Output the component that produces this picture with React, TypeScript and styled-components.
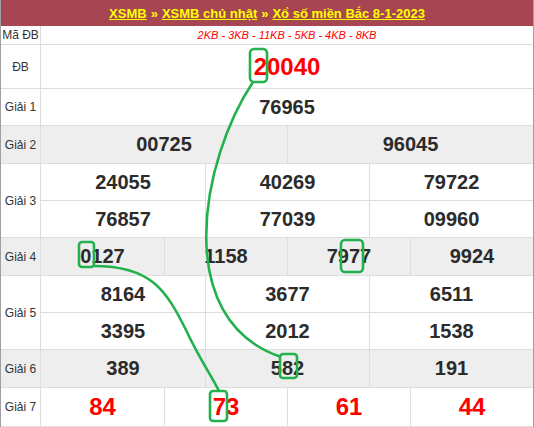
import React from "react";
import styled, { createGlobalStyle } from "styled-components";

const Global = createGlobalStyle`
  html, body { margin: 0; padding: 0; background: #fff; }
  body { font-family: "Liberation Sans", Arial, sans-serif; }
`;

const Board = styled.div`
  position: relative;
  width: 534px;
  box-sizing: border-box;
  border: 1px solid #a0a0a0;
  border-top: none;
  background: #fff;
  color: #333;
`;

const Header = styled.div`
  height: 26px;
  background: #a84552;
  display: flex;
  align-items: center;
  justify-content: center;
  gap: 4px;
  font-size: 13px;
  font-weight: bold;
  color: #ffff00;
`;

const HeaderLink = styled.a`
  color: #ffff00;
  text-decoration: underline;
`;

const Row = styled.div<{ $h: number; $alt?: boolean }>`
  display: grid;
  grid-template-columns: 40px 1fr;
  border-bottom: 1px solid #dddddd;
  background: ${(p) => (p.$alt ? "#eeeeee" : "#ffffff")};
  min-height: ${(p) => p.$h}px;
`;

const Label = styled.div`
  display: flex;
  align-items: center;
  justify-content: center;
  font-size: 12px;
  color: #333;
  border-right: 1px solid #dddddd;
`;

const Values = styled.div`
  display: flex;
  flex-direction: column;
`;

const Line = styled.div<{ $n: number; $h: number; $divider?: boolean }>`
  display: grid;
  grid-template-columns: repeat(${(p) => p.$n}, 1fr);
  height: ${(p) => p.$h}px;
  border-bottom: ${(p) => (p.$divider ? "1px solid #dddddd" : "none")};
`;

const Cell = styled.div<{ $size?: number; $red?: boolean }>`
  display: flex;
  align-items: center;
  justify-content: center;
  font-weight: bold;
  font-size: ${(p) => p.$size ?? 20}px;
  color: ${(p) => (p.$red ? "#ff0000" : "#2b2b2b")};
  border-left: 1px solid #dddddd;
  &:first-child { border-left: none; }
`;

const Codes = styled.div`
  display: flex;
  align-items: center;
  justify-content: center;
  font-size: 11px;
  font-style: italic;
  color: #ff0000;
`;

const Overlay = styled.svg`
  position: absolute;
  left: 0;
  top: 0;
  width: 534px;
  height: 427px;
  pointer-events: none;
`;

type Prize = {
  label: string;
  lines: string[][];
  heights: number[];
  alt?: boolean;
  size?: number;
  red?: boolean;
};

const prizes: Prize[] = [
  { label: "Giải 1", lines: [["76965"]], heights: [36] },
  { label: "Giải 2", lines: [["00725", "96045"]], heights: [37], alt: true },
  {
    label: "Giải 3",
    lines: [
      ["24055", "40269", "79722"],
      ["76857", "77039", "09960"],
    ],
    heights: [36, 36],
  },
  { label: "Giải 4", lines: [["0127", "1158", "7977", "9924"]], heights: [37], alt: true },
  {
    label: "Giải 5",
    lines: [
      ["8164", "3677", "6511"],
      ["3395", "2012", "1538"],
    ],
    heights: [36, 36],
  },
  { label: "Giải 6", lines: [["389", "582", "191"]], heights: [37], alt: true },
  { label: "Giải 7", lines: [["84", "73", "61", "44"]], heights: [38], size: 24, red: true },
];

export default function App() {
  return (
    <>
      <Global />
      <Board>
        <Header>
          <HeaderLink>XSMB</HeaderLink>
          <span>»</span>
          <HeaderLink>XSMB chủ nhật</HeaderLink>
          <span>»</span>
          <HeaderLink>Xổ số miền Bắc 8-1-2023</HeaderLink>
        </Header>
        <Row $h={18}>
          <Label>Mã ĐB</Label>
          <Codes>2KB - 3KB - 11KB - 5KB - 4KB - 8KB</Codes>
        </Row>
        <Row $h={43}>
          <Label>ĐB</Label>
          <Values>
            <Line $n={1} $h={43}>
              <Cell $size={24} $red>20040</Cell>
            </Line>
          </Values>
        </Row>
        {prizes.map((p) => (
          <Row key={p.label} $h={p.heights.reduce((a, b) => a + b, 0)} $alt={p.alt}>
            <Label>{p.label}</Label>
            <Values>
              {p.lines.map((vals, i) => (
                <Line key={i} $n={vals.length} $h={p.heights[i]} $divider={i < p.lines.length - 1}>
                  {vals.map((v, j) => (
                    <Cell key={j} $size={p.size} $red={p.red}>
                      {v}
                    </Cell>
                  ))}
                </Line>
              ))}
            </Values>
          </Row>
        ))}
        <Overlay viewBox="0 0 534 427">
          <g fill="none" stroke="#22b14c" strokeWidth={2.6}>
            <rect x={249} y={49} width={17} height={33} rx={4} />
            <rect x={78} y={242} width={15} height={25} rx={3} />
            <rect x={340} y={240} width={22} height={32} rx={4} />
            <rect x={279} y={354} width={17} height={24} rx={3} />
            <rect x={209} y={391} width={17} height={30} rx={3} />
            <path d="M252,82 C200,160 170,320 280,357" />
            <path d="M93,266 C150,266 165,290 185,330 C198,358 210,375 218,391" />
          </g>
        </Overlay>
      </Board>
    </>
  );
}
